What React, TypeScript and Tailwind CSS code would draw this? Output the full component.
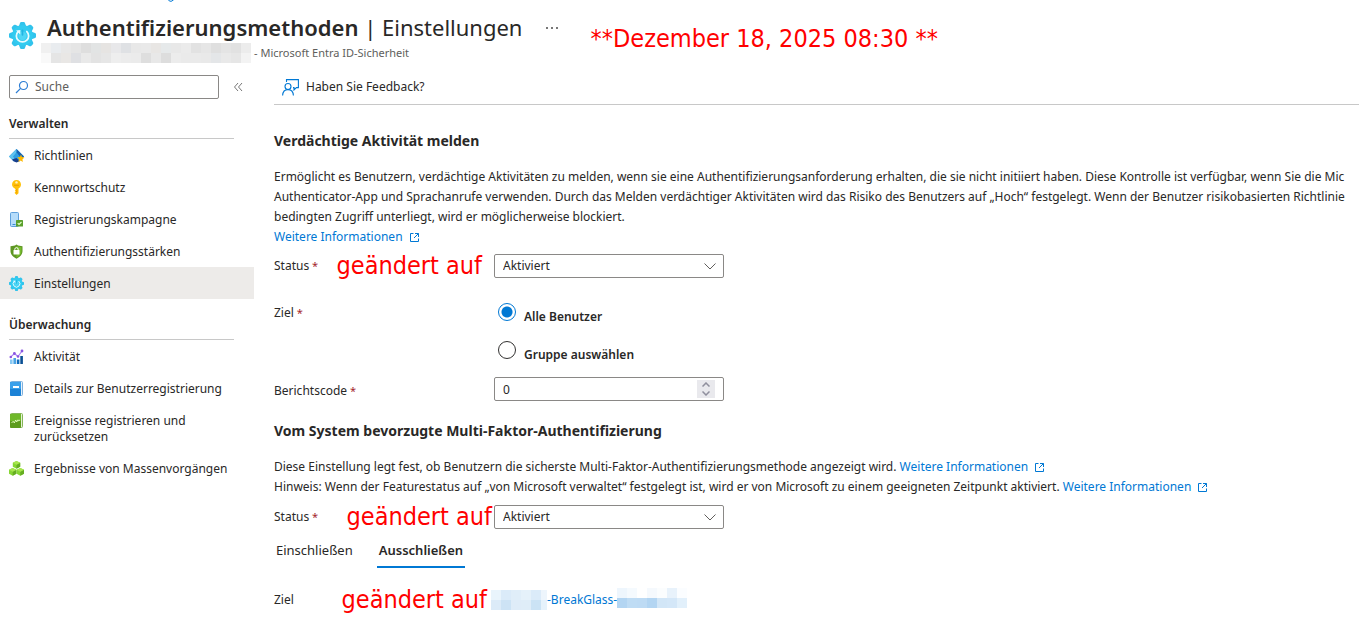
import { useState } from "react";
import type { ReactNode } from "react";

function GearIcon({ size }: { size: number }) {
  return (
    <svg width={size} height={size} viewBox="0 0 26 26" className="shrink-0" aria-hidden="true">
      <g fill="#32c3ec">
        {[0, 45, 90, 135, 180, 225, 270, 315].map((angle) => (
          <path key={angle} d="M9 5.500 10.600.900Q10.900 0 11.800 0h2.400q.9 0 1.200.9L17 5.500z" transform={`rotate(${angle} 13 13)`} />
        ))}
        <circle cx="13" cy="13" r="10" fill="#32cbf0" />
      </g>
      <circle cx="13" cy="13.5" r="4" fill="#4fd6f5" />
      <path d="M8.8 9.2a5.900 5.900 0 1 0 8.4 0" fill="none" stroke="#e9fbff" strokeWidth="1.7" strokeLinecap="round" />
      <path d="M6.800 8.200l4.200-.4-.2 4.300z" fill="#e9fbff" />
      <path d="M13 8v4.500" stroke="#22b4e2" strokeWidth="1.600" strokeLinecap="round" />
    </svg>
  );
}

function PolicyIcon() {
  return (
    <svg width="16" height="16" viewBox="0 0 16 16" className="shrink-0" aria-hidden="true">
      <path d="M7.5 1 15 8.4l-4.6 4.9H4.6L0 8.4z" fill="#1e8ad6" />
      <path d="M7.5 1 0 8.4l4 4.2 5-7z" fill="#5fc3f0" />
      <path d="M7.5 4.2 11 8.6l-3.5 4.7L4 8.6z" fill="#2f9fe2" />
      <path d="M7.5 1 15 8.4l-2 2L7.5 4.4z" fill="#1664b4" />
      <path d="M4.6 13.3 3 11.6 7.5 10l3 3.3-3 1.2z" fill="#173f8c" />
      <path d="m12 6.6.9 2.3 2.6.6-2 1.7.3 2.8-2.2-1.4-2.3 1.3.7-2.6-1.6-2 2.6-.3z" fill="#ffb900" />
    </svg>
  );
}

function KeyIcon() {
  return (
    <svg width="16" height="16" viewBox="0 0 16 16" className="shrink-0" aria-hidden="true">
      <path
        d="M7.5 0C10 0 12 2 12 4.5c0 1.8-1 3.3-2.5 4v4.7L7.6 15 5.8 13.2v-1l.9-.9-.9-.9.9-1-.9-.9C4.2 7.7 3 6.2 3 4.5 3 2 5 0 7.5 0z"
        fill="#ffc20a"
      />
      <circle cx="7.5" cy="2.4" r="1.2" fill="#fff3c4" />
      <path d="M5 5.3h5" stroke="#f09a00" strokeWidth="1" />
      <path d="M7.7 9v4.5" stroke="#f09a00" strokeWidth=".8" />
    </svg>
  );
}

function CampaignIcon() {
  return (
    <svg width="16" height="16" viewBox="0 0 16 16" className="shrink-0" aria-hidden="true">
      <rect x="1.5" y=".5" width="8" height="14" rx="1" fill="#b5dcfa" stroke="#5ea0dc" />
      <path d="M3.5 12.5h3" stroke="#3c8ad0" />
      <rect x="7" y="8" width="7" height="6.5" rx=".6" fill="#5aa02c" />
      <path d="m8.7 11.2 1.300 1.300 2.500-2.500" fill="none" stroke="#e4ffc8" strokeWidth="1.2" />
    </svg>
  );
}

function ShieldIcon() {
  return (
    <svg width="16" height="16" viewBox="0 0 16 16" className="shrink-0" aria-hidden="true">
      <path d="M7.5.5c2 1.500 4 1.600 6 1.700v5c0 3.500-3 6-6 7.500-3-1.500-6-4-6-7.500v-5c2-.1 4-.2 6-1.700z" fill="#5e9624" />
      <path d="M7.5 1.700c1.700 1.100 3.300 1.300 5 1.500v4c0 2.900-2.500 5-5 6.400z" fill="#76bc2d" />
      <rect x="4.500" y="6" width="6" height="4.500" rx=".5" fill="#fff" />
      <path d="M5.800 6.400V5.300a1.700 1.700 0 0 1 3.400 0v1.100" fill="none" stroke="#fff" strokeWidth="1" />
    </svg>
  );
}

function ActivityIcon() {
  return (
    <svg width="16" height="16" viewBox="0 0 16 16" className="shrink-0" aria-hidden="true">
      <path d="M1 10.500h2.600V15H1z" fill="#86c8f4" />
      <path d="M4.400 9H7v6H4.400z" fill="#4aa3e4" />
      <path d="M7.800 10.500h2.600V15H7.800z" fill="#0f6cbd" />
      <path d="M11.300 7h2.600v8h-2.600z" fill="#0a4f94" />
      <path d="m1.800 7.800 3.600-3.300 3.600 3 4-5.500" fill="none" stroke="#a67af4" strokeWidth="1.100" />
      <g fill="#8a55e0">
        <circle cx="1.800" cy="8" r="1.300" />
        <circle cx="5.400" cy="4.500" r="1.400" />
        <circle cx="9" cy="7.500" r="1.300" />
        <circle cx="13" cy="2" r="1.400" />
      </g>
    </svg>
  );
}

function BookIcon() {
  return (
    <svg width="16" height="16" viewBox="0 0 16 16" className="shrink-0" aria-hidden="true">
      <rect x="1.500" y=".500" width="12" height="14" rx="1" fill="#e8f2fb" stroke="#7fb0dc" />
      <rect x="1" y="1" width="11" height="14" rx="1" fill="#1b82d6" />
      <rect x="1" y="1" width="11" height="7" rx="1" fill="#3ba0ea" />
      <rect x="4" y="5" width="6" height="2" fill="#fff" />
    </svg>
  );
}

function LogIcon() {
  return (
    <svg width="16" height="16" viewBox="0 0 16 16" className="shrink-0" aria-hidden="true">
      <rect x="1.500" y=".500" width="12" height="14" rx="1" fill="#e6f3d6" stroke="#86b45a" />
      <rect x="1" y="1" width="11" height="14" rx="1" fill="#5c9c1c" />
      <rect x="1" y="1" width="11" height="7" rx="1" fill="#6fb82a" />
      <path d="m2.500 9.500 2-1 .8 1.500 1.400-3 1 2 1.300-2.200.7 1 1.300-.8" fill="none" stroke="#e4ffc0" strokeWidth=".9" />
    </svg>
  );
}

function Cube({ x, y }: { x: number; y: number }) {
  return (
    <g transform={`translate(${x} ${y})`}>
      <path d="m3.700 0 3.700 1.800v4L3.700 7.700 0 5.800v-4z" fill="#86d633" />
      <path d="M3.700 3.700 7.400 1.800v4L3.700 7.700z" fill="#66ad22" />
      <path d="m3.700 0 3.700 1.800-3.700 1.900L0 1.800z" fill="#a8e64e" />
    </g>
  );
}

function CubesIcon() {
  return (
    <svg width="16" height="16" viewBox="0 0 16 16" className="shrink-0" aria-hidden="true">
      <Cube x={3.8} y={0} />
      <Cube x={0} y={7} />
      <Cube x={7.6} y={7} />
    </svg>
  );
}

function ExternalIcon() {
  return (
    <svg width="11" height="11" viewBox="0 0 11 11" className="ml-1.5 inline-block" fill="none" stroke="#0078d4" aria-hidden="true">
      <path d="M4.500 1.500h-3v8h8v-3M6 1.500h3.500V5M9.500 1.500 5 6" />
    </svg>
  );
}

// Redacted names are shown as a grid of flat blocks
function Mosaic({ rows, width, className = "" }: { rows: string[][]; width: number; className?: string }) {
  return (
    <svg width={width} height={rows.length * 10} className={`shrink-0 ${className}`} shapeRendering="crispEdges" aria-hidden="true">
      {rows.map((row, y) =>
        row.map((fill, x) => <rect key={`${x}-${y}`} x={x * 10} y={y * 10} width={10} height={10} fill={fill} />)
      )}
    </svg>
  );
}

const tenantBlocks = [
  ["#f0f0f0", "#e9ecef", "#e8e8e8", "#e5e5e5", "#dedede", "#e2e4e4", "#e6e4e2", "#e8e8ea", "#dfe1e4", "#e8e8e8", "#e9e9e9", "#e8e6e4", "#e6e9ea", "#e8e8e8", "#ebebeb", "#e2e2e2", "#e6e6e6", "#dfdfdf", "#e4e4e4", "#e1e1e1", "#ececec"],
  ["#f9f9f9", "#e5e5e5", "#e9e7e5", "#dfe0e3", "#e9e9e9", "#e3e3e3", "#e6e6e6", "#eeeeee", "#ececec", "#ebebeb", "#dedede", "#e8e8e8", "#dddddd", "#ececec", "#eaeaea", "#eaeaea", "#e9e9e9", "#e4e6e8", "#e9e9e9", "#e6e6e6", "#f3f3f3"],
];

const prefixBlocks = [
  ["#e9f4fc", "#dbebf9", "#e0eef9", "#e5f1fa", "#dbebf9", "#edf5fc"],
  ["#dcebf8", "#cde3f5", "#dfecf8", "#dfedf8", "#cbe3f5", "#e6f2fb"],
];

const suffixBlocks = [
  ["#eef6fd", "#f5fafe", "#ffffff", "#f5f9fd", "#fbfdfe", "#e8f2fb", "#fbfdff"],
  ["#b3d5f2", "#bfdcf4", "#bedbf4", "#b3d5f2", "#d2e6f7", "#d4e7f8", "#e2f0fb"],
];

type NavItem = { label: string; icon: ReactNode };

const sections: { title: string; items: NavItem[] }[] = [
  {
    title: "Verwalten",
    items: [
      { label: "Richtlinien", icon: <PolicyIcon /> },
      { label: "Kennwortschutz", icon: <KeyIcon /> },
      { label: "Registrierungskampagne", icon: <CampaignIcon /> },
      { label: "Authentifizierungsstärken", icon: <ShieldIcon /> },
      { label: "Einstellungen", icon: <GearIcon size={15} /> },
    ],
  },
  {
    title: "Überwachung",
    items: [
      { label: "Aktivität", icon: <ActivityIcon /> },
      { label: "Details zur Benutzerregistrierung", icon: <BookIcon /> },
      { label: "Ereignisse registrieren und zurücksetzen", icon: <LogIcon /> },
      { label: "Ergebnisse von Massenvorgängen", icon: <CubesIcon /> },
    ],
  },
];

function Sidebar() {
  return (
    <aside className="w-[254px] shrink-0 pt-3">
      <div className="flex items-center pl-[9px]">
        <label className="flex h-6 w-[210px] items-center gap-1.5 rounded-xs border border-[#8a8886] px-[5px]">
          <svg width="14" height="14" viewBox="0 0 14 14" fill="none" stroke="#2b7cd3" strokeWidth="1.2" className="shrink-0" aria-hidden="true">
            <circle cx="8.5" cy="5.5" r="4" />
            <path d="M5.6 8.4 1 13" />
          </svg>
          <input type="text" placeholder="Suche" aria-label="Suche" className="w-full outline-none placeholder:text-[#605e5c]" />
        </label>
        <button type="button" aria-label="Menü einklappen" className="ml-[14px]">
          <svg width="10" height="10" viewBox="0 0 10 10" fill="none" stroke="#777" aria-hidden="true">
            <path d="M5 1 1.500 5 5 9M9 1 5.500 5 9 9" />
          </svg>
        </button>
      </div>
      <nav className="flex flex-col gap-[11px] pt-[10px]">
        {sections.map((section) => (
          <section key={section.title}>
            <h2 className="mr-5 ml-[9px] flex h-[30px] items-center border-b border-[#c8c8c8] font-semibold">{section.title}</h2>
            <ul>
              {section.items.map((item) => {
                const active = item.label === "Einstellungen";
                return (
                  <li key={item.label}>
                    <a
                      href="#"
                      aria-current={active ? "page" : undefined}
                      className={`flex items-start pt-[9px] pr-5 pb-[7px] pl-[9px] leading-4 ${active ? "bg-[#edebe9]" : ""}`}
                    >
                      <span className="w-[25px] shrink-0">{item.icon}</span>
                      {item.label}
                    </a>
                  </li>
                );
              })}
            </ul>
          </section>
        ))}
      </nav>
    </aside>
  );
}

function MoreLink() {
  return (
    <a href="#" className="whitespace-nowrap text-[#0078d4]">
      Weitere Informationen
      <ExternalIcon />
    </a>
  );
}

function Note({ children }: { children: ReactNode }) {
  return <span className="font-['DejaVu_Sans_Condensed','DejaVu_Sans',sans-serif] text-[25px] leading-6 whitespace-nowrap text-[#ff0000]">{children}</span>;
}

function Required() {
  return <span className="text-[11px] text-[#a4262c]"> *</span>;
}

function StatusSelect({ id }: { id: string }) {
  return (
    <div className="relative w-[230px]">
      <select id={id} className="block h-6 w-full appearance-none rounded-xs border border-[#8a8886] bg-white px-2 leading-5">
        <option>Aktiviert</option>
        <option>Deaktiviert</option>
      </select>
      <svg width="12" height="7" viewBox="0 0 12 7" fill="none" stroke="#605e5c" className="pointer-events-none absolute top-[9px] right-2" aria-hidden="true">
        <path d="M.5.5 6 6 11.500.5" />
      </svg>
    </div>
  );
}

function RadioOption({ value, checked, onSelect }: { value: string; checked: boolean; onSelect: () => void }) {
  return (
    <label className="flex items-start gap-2 font-semibold">
      <input
        type="radio"
        name="ziel"
        checked={checked}
        onChange={onSelect}
        className="size-[18px] appearance-none rounded-full border border-[#323130] checked:border-[#0078d4] checked:bg-[radial-gradient(circle,#0078d4_5px,white_6px)]"
      />
      <span className="pt-1">{value}</span>
    </label>
  );
}

export default function App() {
  const [target, setTarget] = useState("Alle Benutzer");
  const [code, setCode] = useState(0);
  const [tab, setTab] = useState("Ausschließen");

  return (
    <div className="overflow-hidden bg-white font-['Noto_Sans',sans-serif] text-[12px] leading-5 text-[#292827]">
      <div className="h-[3px] pl-[168px]">
        <svg width="6" height="3" viewBox="0 0 6 3" fill="none" stroke="#0078d4" aria-hidden="true">
          <path d="M.5.5Q3 2.500 5.500 0" />
        </svg>
      </div>
      <header className="flex h-[60px] items-start pt-2 pl-[9px]">
        <div className="pt-[11px]">
          <GearIcon size={27} />
        </div>
        <div className="ml-[5px]">
          <h1 className="pl-[6px] text-[22px] leading-8 whitespace-nowrap">
            <span className="font-semibold">Authentifizierungsmethoden</span> | Einstellungen
          </h1>
          <div className="flex text-[11px] whitespace-nowrap text-[#605e5c]">
            <Mosaic rows={tenantBlocks} width={210} />
            <span className="pl-[3px]">- Microsoft Entra ID-Sicherheit</span>
          </div>
        </div>
        <button type="button" aria-label="Weitere Aktionen" className="ml-6 pt-4">
          <svg width="12" height="2" viewBox="0 0 12 2" fill="#777" aria-hidden="true">
            <path d="M0 0h2v2H0zM5 0h2v2H5zM10 0h2v2h-2z" />
          </svg>
        </button>
        <div className="ml-8 pt-4">
          <Note>**Dezember 18, 2025 08:30 **</Note>
        </div>
      </header>

      <div className="flex">
        <Sidebar />
        <main className="min-w-0 flex-1 overflow-hidden pt-[7px] pl-5">
          <div className="flex h-[35px] items-center border-b border-[#c8c8c8]">
            <button type="button" className="flex items-center gap-[7px] pl-2">
              <svg width="17" height="17" viewBox="0 0 17 17" fill="none" stroke="#0078d4" strokeWidth="1.1" aria-hidden="true">
                <path d="M4.500 3V.6h11.900v8h-2l-2.400 2.400V8.600h-1" />
                <circle cx="6" cy="7.500" r="3" />
                <path d="M.6 16.500c.2-3.500 2.400-5.900 5.400-5.900s5.200 2.400 5.400 5.900" />
              </svg>
              Haben Sie Feedback?
            </button>
          </div>

          <section className="pt-[26px]">
            <h2 className="text-[14px] font-bold">Verdächtige Aktivität melden</h2>
            <p className="mt-4 whitespace-nowrap">
              Ermöglicht es Benutzern, verdächtige Aktivitäten zu melden, wenn sie eine Authentifizierungsanforderung erhalten, die sie nicht initiiert haben. Diese Kontrolle ist verfügbar, wenn Sie die Mic
              <br />
              Authenticator-App und Sprachanrufe verwenden. Durch das Melden verdächtiger Aktivitäten wird das Risiko des Benutzers auf „Hoch“ festgelegt. Wenn der Benutzer risikobasierten Richtlinie
              <br />
              bedingten Zugriff unterliegt, wird er möglicherweise blockiert.
              <br />
              <MoreLink />
            </p>

            <div className="mt-[7px] flex items-center">
              <div className="flex w-[220px] items-center justify-between pr-3">
                <label htmlFor="status-report">
                  Status
                  <Required />
                </label>
                <Note>geändert auf</Note>
              </div>
              <StatusSelect id="status-report" />
            </div>

            <div role="radiogroup" aria-label="Ziel" className="mt-[25px] flex">
              <span className="w-[224px]">
                Ziel
                <Required />
              </span>
              <div className="flex flex-col gap-[14px]">
                {["Alle Benutzer", "Gruppe auswählen"].map((value) => (
                  <RadioOption key={value} value={value} checked={target === value} onSelect={() => setTarget(value)} />
                ))}
              </div>
            </div>

            <div className="mt-3 flex items-center">
              <label htmlFor="report-code" className="w-[220px] pt-1">
                Berichtscode
                <Required />
              </label>
              <div className="relative w-[230px]">
                <input
                  id="report-code"
                  type="number"
                  value={code}
                  onChange={(e) => setCode(Number(e.target.value))}
                  className="block h-6 w-full [appearance:textfield] rounded-xs border border-[#8a8886] px-2 [&::-webkit-inner-spin-button]:appearance-none"
                />
                <div className="absolute top-[3px] right-[9px] flex w-[18px] flex-col bg-[#e9e9ed] text-[#8f8f9d]">
                  <button type="button" aria-label="Erhöhen" onClick={() => setCode(code + 1)} className="flex h-[9px] items-center justify-center">
                    <svg width="8" height="5" viewBox="0 0 8 5" fill="none" stroke="currentColor" strokeWidth="1.5" aria-hidden="true">
                      <path d="M.5 4.500 4 1l3.500 3.500" />
                    </svg>
                  </button>
                  <button type="button" aria-label="Verringern" onClick={() => setCode(code - 1)} className="flex h-[9px] items-center justify-center">
                    <svg width="8" height="5" viewBox="0 0 8 5" fill="none" stroke="currentColor" strokeWidth="1.5" aria-hidden="true">
                      <path d="M.5.5 4 4 7.500.5" />
                    </svg>
                  </button>
                </div>
              </div>
            </div>
          </section>

          <section className="pt-5">
            <h2 className="text-[14px] font-bold">Vom System bevorzugte Multi-Faktor-Authentifizierung</h2>
            <p className="mt-4 whitespace-nowrap">
              Diese Einstellung legt fest, ob Benutzern die sicherste Multi-Faktor-Authentifizierungsmethode angezeigt wird. <MoreLink />
              <br />
              Hinweis: Wenn der Featurestatus auf „von Microsoft verwaltet“ festgelegt ist, wird er von Microsoft zu einem geeigneten Zeitpunkt aktiviert. <MoreLink />
            </p>

            <div className="mt-2 flex items-center">
              <div className="flex w-[220px] items-center justify-between pr-0.5">
                <label htmlFor="status-mfa">
                  Status
                  <Required />
                </label>
                <Note>geändert auf</Note>
              </div>
              <StatusSelect id="status-mfa" />
            </div>

            <div role="tablist" className="mt-1 flex gap-[22px]">
              {["Einschließen", "Ausschließen"].map((name) => (
                <button
                  key={name}
                  type="button"
                  role="tab"
                  aria-selected={tab === name}
                  onClick={() => setTab(name)}
                  className={`h-[35px] border-b-2 px-0.5 text-[13px] ${tab === name ? "border-[#0078d4] font-semibold" : "border-transparent"}`}
                >
                  {name}
                </button>
              ))}
            </div>

            <div className="mt-5 flex items-center pb-4">
              <div className="flex w-[217px] items-center justify-between pr-1">
                <span>Ziel</span>
                <Note>geändert auf</Note>
              </div>
              <a href="#" className="flex items-center text-[#0078d4]">
                <Mosaic rows={prefixBlocks} width={56} />
                -BreakGlass-
                <Mosaic rows={suffixBlocks} width={70} className="mb-1" />
              </a>
            </div>
          </section>
        </main>
      </div>
    </div>
  );
}
